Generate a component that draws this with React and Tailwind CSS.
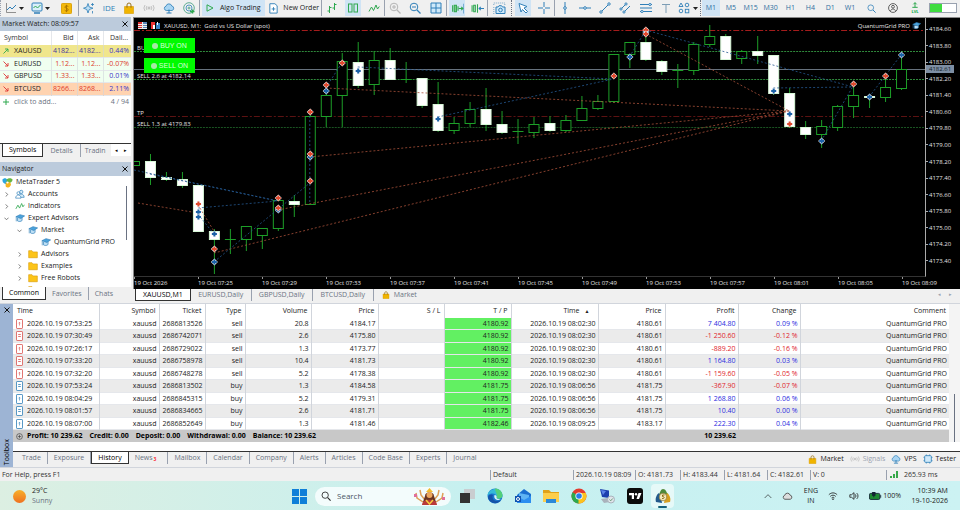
import React, { useState } from 'react';
import clsx from 'clsx';

const BLUE = '#2f7fb8';
const GREEN = '#2fa84f';

/* ---------- icons ---------- */

const Svg = ({ size = 12, box = 12, color = BLUE, children, ...rest }) => (
    <svg width={size} height={size} viewBox={`0 0 ${box} ${box}`} fill="none" stroke={color} strokeWidth="1" aria-hidden="true" className="shrink-0" {...rest}>
        {children}
    </svg>
);

const Caret = () => (
    <svg width="5" height="3" viewBox="0 0 5 3" className="shrink-0" aria-hidden="true"><path d="M0 0h5L2.500 3z" fill="#222" /></svg>
);

const Bag = ({ size = 12 }) => (
    <Svg size={size}>
        <path d="M4 5V3a2 2 0 0 1 4 0v2" stroke="#9a7420" />
        <path d="M1.500 4.500h9v7h-9z" fill="#f0b400" stroke="#d79a00" strokeWidth=".6" />
        <path d="M4 4v2M8 4v2" stroke="#9a7420" strokeWidth=".8" />
    </Svg>
);

const Waves = ({ size = 12 }) => (
    <Svg size={size} color="#b5b5b5">
        <circle cx="6" cy="6" r="1" />
        <path d="M4 4a3 3 0 0 0 0 4M8 4a3 3 0 0 1 0 4M2 3a5 5 0 0 0 0 6M10 3a5 5 0 0 1 0 6" strokeWidth=".8" />
    </Svg>
);

const Cloud = ({ size = 12 }) => (
    <Svg size={size}>
        <path d="M3.200 8.500a2.200 2.200 0 0 1-.2-4.300A3 3 0 0 1 8.800 4a2.300 2.300 0 0 1 .2 4.500z" fill="#a9d5f3" strokeWidth=".8" />
        <path d="M6 8v3M3.500 11h5M6 7.500v1" />
    </Svg>
);

const Chip = ({ size = 12 }) => (
    <Svg size={size}>
        <path d="M4 .5v11M8 .5v11M.5 4h11M.5 8h11" strokeWidth=".8" />
        <rect x="2" y="2" width="8" height="8" rx="1" fill="#cfe9fa" />
    </Svg>
);

const Cap = ({ size = 10 }) => (
    <Svg size={size}>
        <path d="M3 6v3.500c1.500 1 4 1 5.500-.5V5.500" fill="#bfe0f5" strokeWidth=".8" />
        <path d="M1 4.500 6 2l5.500 1.500L7 6.500z" fill="#4ba3dc" strokeWidth=".8" />
        <path d="M1.500 5v5" strokeWidth=".8" />
    </Svg>
);

const Folder = () => (
    <Svg size={10} color="#d79a00">
        <path d="M.8 2h4l1 1.500h5.400v7H.8z" fill="#fcc419" strokeWidth=".7" />
    </Svg>
);

const People = () => (
    <Svg size={10}>
        <circle cx="7.500" cy="3.500" r="2" fill="#d7ecf9" strokeWidth=".8" />
        <path d="M4.500 10c0-5 6.500-5 6.500 0z" fill="#d7ecf9" strokeWidth=".8" />
        <circle cx="4" cy="5" r="1.700" fill="#fff" strokeWidth=".8" />
        <path d="M.8 11c0-5 6.400-5 6.400 0z" fill="#fff" strokeWidth=".8" />
    </Svg>
);

const Zigzag = ({ size = 12 }) => (
    <Svg size={size} color={GREEN}><path d="M1 9.500 3.500 5l2 3.500L8 3l1.500 4 1.800-2.500" /></Svg>
);

const MtLogo = ({ size = 11 }) => (
    <Svg size={size} stroke="none">
        <path d="M.5 3C1.500.8 5 .8 5.500 3v5C3 8 .2 6 .5 3z" fill="#2aa7e0" />
        <path d="M5 3C6 .8 11 .8 11.500 3c0 2-2 3.500-4 3.500L5 6z" fill="#67b644" />
        <path d="M4 6c2-1 4.500-.5 5.500 1S8.500 11.500 6 11.500 4 9 4 8z" fill="#f6b51e" />
        <circle cx="6" cy="6" r="1.200" fill="#fff" />
    </Svg>
);

const Doc = ({ color, lines }) => (
    <svg width="7" height="10" viewBox="0 0 7 10" fill="#fff" stroke={color} strokeWidth=".8" className="shrink-0" aria-hidden="true">
        <rect x=".5" y=".5" width="6" height="9" rx=".6" />
        {lines ? <path d="M2.200 3.500h2.600M2.200 5.500h2.600" /> : <path d="M3.500 6.500v-3M2.500 4.300l1-1 1 1" strokeWidth=".6" />}
    </svg>
);

const Mag = ({ sign = '', color = BLUE, size = 12 }) => (
    <Svg size={size} color={color}>
        <circle cx="5" cy="5" r="3.800" />
        <path d="m8 8 3.500 3.500" strokeWidth="1.300" />
        {sign && <path d={sign === '+' ? 'M3 5h4M5 3v4' : 'M3 5h4'} />}
    </Svg>
);

/* ---------- toolbar ---------- */

const Tool = ({ label, active, children, className }) => (
    <button type="button" aria-label={label} className={clsx('flex h-4 min-w-4 items-center justify-center', active && 'bg-[#d0e4f5]', className)}>
        {children}
    </button>
);

const Group = ({ className, children }) => (
    <div className={clsx('flex h-4 shrink-0 items-center justify-around border-l', className)}>{children}</div>
);

const frames = ['M1', 'M5', 'M15', 'M30', 'H1', 'H4', 'D1', 'W1'];

const Toolbar = () => {
    const [frame, setFrame] = useState('M1');
    return (
        <header className="flex h-[17px] items-start overflow-hidden bg-[#f0f0f0]">
            <Group className="w-[78px] border-dotted border-gray-400">
                <Tool label="Charts" className="gap-[2px]">
                    <Svg><path d="M1.500 1v9.500H11" stroke="#777" strokeWidth=".8" /><path d="m2 8 3-3 2 2 4-4" /></Svg>
                    <Caret />
                </Tool>
                <Tool label="Templates" className="gap-[2px]">
                    <Svg><rect x="1" y="1" width="10" height="8" rx="1" fill="#d9effb" /><path d="m2.500 6 2-2 2 2L9.500 3" stroke={GREEN} /><path d="M3 11h6" strokeWidth="1.500" /></Svg>
                    <Caret />
                </Tool>
                <Tool label="Deposit">
                    <Svg size={11}><rect x=".5" y=".5" width="11" height="11" rx="1" fill="#f4b90c" stroke="#d99e00" /><path d="M8 4C7 2.500 4 3 4.300 4.600 4.600 6.200 8 5.600 7.900 7.500 7.700 9 5 9.200 4 7.800M6 2v8" stroke="#a87300" /></Svg>
                </Tool>
            </Group>
            <Group className="w-[121px] border-gray-400">
                <Tool label="Assistant"><Svg><path d="M5 1.500 6.200 5 10 6.200 6.200 7.500 5 11 3.800 7.500.5 6.200 3.800 5z" fill="#bfe0f5" strokeWidth=".8" /><path d="M9.500 1v3M8 2.500h3M9.500 9v2.500" strokeWidth=".8" /></Svg></Tool>
                <Tool label="IDE" className="text-[8px] text-[#2f7fb8]">IDE</Tool>
                <Tool label="Market"><Bag /></Tool>
                <Tool label="Signals"><Waves /></Tool>
                <Tool label="VPS"><Cloud /></Tool>
                <Tool label="Copy trading">
                    <Svg size={12} color="#3a9a7a"><circle cx="6" cy="6" r="5.300" strokeWidth=".8" /><circle cx="6" cy="6" r="3" stroke={BLUE} strokeWidth=".8" /><circle cx="6" cy="6" r="1" strokeWidth=".8" /><path d="M7 9.500h4.500M9.500 7.500v4" stroke={GREEN} strokeWidth="1.500" /></Svg>
                </Tool>
            </Group>
            <Group className="w-[122px] border-gray-400">
                <Tool label="Algo Trading" active className="w-[63px] gap-[6px]">
                    <Svg size={8} box={8} color={GREEN}><path d="m1 .8 6 3.200L1 7.200z" /></Svg>
                    <span className="text-[#222]">Algo Trading</span>
                </Tool>
                <Tool label="New Order" className="gap-1">
                    <Svg size={11}><path d="M2 .8h5.500L10 3v8H2z" fill="#fff" /><path d="M6 4.500v4M4 6.500h4" /></Svg>
                    <span className="whitespace-nowrap text-[#222]">New Order</span>
                </Tool>
            </Group>
            <Group className="w-[63px] border-gray-400">
                <Tool label="Bar chart"><Svg color={GREEN}><path d="M3.500 4v7M1.500 9h2M3.500 5.500h2M8.500 1v7M6.500 6h2M8.500 2.500h2" /></Svg></Tool>
                <Tool label="Candlesticks" active><Svg color={GREEN}><rect x="1.500" y="2" width="3.500" height="8" /><rect x="7" y="2" width="3.500" height="8" /></Svg></Tool>
                <Tool label="Line chart"><Zigzag /></Tool>
            </Group>
            <Group className="w-[62px] border-gray-400">
                <Tool label="Zoom in"><Mag sign="+" color="#b5b5b5" /></Tool>
                <Tool label="Zoom out"><Mag sign="-" /></Tool>
                <Tool label="Tile windows"><Svg><path d="M1 1h10v10H1zM6 1v10M1 6h10" fill="#cfe9fa" /></Svg></Tool>
            </Group>
            <Group className="w-[41px] border-gray-400">
                <Tool label="Auto scroll" active><Svg size={13} color={GREEN}><path d="M1.500 3v6M3 3h2v6H3zM6.500 4v4" fill="#7fd08f" /><path d="M12 1.500v9" stroke={BLUE} /><path d="M7 6h4M9.500 4.500 11 6 9.500 7.500" /></Svg></Tool>
                <Tool label="Chart shift"><Svg size={13} color={GREEN}><path d="M1 3v6M2.500 3h1.500v6H2.500zM6 2v8" /><path d="M12 6H7.500M9 4.500 7.500 6 9 7.500" stroke={BLUE} /></Svg></Tool>
            </Group>
            <Group className="w-6 border-gray-400">
                <Tool label="Screenshot"><Svg size={13} box={13}><path d="M.8 3V1h11v2M.8 5v7" stroke="#7aa7c7" strokeDasharray="1 1" /><path d="M3 5h2l1-1.300h2.500l1 1.300H12v6.500H3z" fill="#cfe9fa" /><circle cx="7.500" cy="8" r="1.800" /></Svg></Tool>
            </Group>
            <Group className="w-[43px] border-dotted border-gray-500">
                <Tool label="Cursor" active><Svg><path d="m2 1.500 8 3-3 1.500 3.500 3.500-1.500 1.500L5.500 7.500 4 10z" fill="#fff" /></Svg></Tool>
                <Tool label="Crosshair"><Svg><path d="M6 0v5M6 7v5M0 6h5M7 6h5" /></Svg></Tool>
            </Group>
            <Group className="w-[146px] border-gray-400">
                <Tool label="Vertical line"><Svg><path d="M6 0v12" /><circle cx="6" cy="6" r="1.300" fill="#fff" /></Svg></Tool>
                <Tool label="Horizontal line"><Svg><path d="M0 6h12" /><circle cx="6" cy="6" r="1.300" fill="#fff" /></Svg></Tool>
                <Tool label="Trend line"><Svg><path d="m2 10 8-8" /><circle cx="2" cy="10" r="1.200" fill="#fff" /><circle cx="10" cy="2" r="1.200" fill="#fff" /></Svg></Tool>
                <Tool label="Channel"><Svg><path d="m2 7 5-5M5 10l6-6" /><circle cx="2" cy="7" r="1.100" fill="#fff" /><circle cx="7" cy="2" r="1.100" fill="#fff" /><circle cx="5" cy="10" r="1.100" fill="#fff" /></Svg></Tool>
                <Tool label="Fibonacci"><Svg><path d="M0 2.500h12M0 6h12M0 9.500h12" /><circle cx="2" cy="9.500" r="1.100" fill="#fff" /><circle cx="10" cy="2.500" r="1.100" fill="#fff" /></Svg></Tool>
                <Tool label="Text"><Svg color="#7d9db5"><path d="M2 2.500h8M6 2.500V11" /></Svg></Tool>
                <Tool label="Objects" className="gap-[3px]">
                    <Svg><path d="m3 1 2 3.500H1z" strokeWidth=".9" /><circle cx="9" cy="3" r="1.800" strokeWidth=".9" /><circle cx="3" cy="9" r="1.800" strokeWidth=".9" /><rect x="7.300" y="7.300" width="3.500" height="3.500" strokeWidth=".9" /></Svg>
                    <Caret />
                </Tool>
            </Group>
            <Group className="w-[160px] border-dotted border-gray-500">
                {frames.map((f) => (
                    <button key={f} type="button" onClick={() => setFrame(f)} className={clsx('h-4 w-[18px] text-center text-[#2f6f9f]', f === frame && 'bg-[#d0e4f5]')}>{f}</button>
                ))}
            </Group>
            <div className="flex h-4 grow items-center justify-around">
                <Tool label="Search"><Mag size={9} /></Tool>
                <Tool label="Account"><Svg size={10} color="#444"><circle cx="6" cy="6" r="5.300" /><circle cx="6" cy="4.500" r="1.700" /><path d="M3 9.500c1-3 5-3 6 0" /></Svg></Tool>
                <Tool label="Level" className="flex-col">
                    <Svg size={8} color={GREEN}><path d="M6 1v7M3.500 3.500 6 1l2.500 2.500M2 8h8" strokeWidth="1.500" /></Svg>
                    <span className="text-[4px] leading-[4px] font-bold text-green-600">LVL</span>
                </Tool>
                <div className="flex h-[10px] w-7 border border-gray-400 bg-white"><div className="w-3 bg-[#3fdc3f]" /></div>
            </div>
        </header>
    );
};

/* ---------- left side ---------- */

const quotes = [
    { name: 'XAUUSD', bid: '4182...', ask: '4182...', day: '0.44%', up: true, row: 'bg-[#f0e68c]', price: 'text-[#4338a0]' },
    { name: 'EURUSD', bid: '1.12...', ask: '1.12...', day: '-0.07%', row: 'bg-[#f0fff0]', price: 'text-[#dc3a2c]', neg: true },
    { name: 'GBPUSD', bid: '1.33...', ask: '1.33...', day: '0.01%', row: 'bg-[#f0fff0]', price: 'text-[#dc3a2c]' },
    { name: 'BTCUSD', bid: '8266...', ask: '8268...', day: '2.11%', row: 'bg-[#ffd3b0]', price: 'text-[#e0402c]' },
];

const PanelTitle = ({ children }) => (
    <div className="flex h-[14px] shrink-0 items-center justify-between bg-[#bccbdc] pr-[3px] pl-[2px] text-[#222]">
        <h2>{children}</h2>
        <button type="button" aria-label="Close">
            <Svg size={6} box={6} color="#111"><path d="m.5.5 5 5m0-5-5 5" /></Svg>
        </button>
    </div>
);

const SideTab = ({ active, className = 'px-[7px]', children }) => (
    <button type="button" className={clsx('h-[13px] shrink-0', active ? 'border border-t-0 border-[#333] bg-white px-[6px] text-black' : 'text-gray-500', !active && className)}>{children}</button>
);

const MarketWatch = () => (
    <section className="flex h-[140px] flex-col bg-white">
        <PanelTitle>Market Watch: 08:09:57</PanelTitle>
        <table className="h-[77px] w-full table-fixed border-collapse whitespace-nowrap">
            <colgroup><col className="w-[51px]" /><col className="w-[26px]" /><col className="w-[26px]" /><col /></colgroup>
            <thead>
                <tr className="h-[14px] text-right text-[#333]">
                    <th className="border-r border-gray-200 pl-1 text-left font-normal">Symbol</th>
                    <th className="border-r border-gray-200 pr-[3px] font-normal">Bid</th>
                    <th className="border-r border-gray-200 pr-[3px] font-normal">Ask</th>
                    <th className="pr-[3px] font-normal">Dail...</th>
                </tr>
            </thead>
            <tbody>
                {quotes.map((q) => (
                    <tr key={q.name} className={clsx('border-b border-gray-200 text-right', q.row)}>
                        <td className="border-r border-gray-300/60 pl-[3px] text-left text-[#222]">
                            <span className="flex items-center gap-[5px]">
                                <Svg size={6} box={6} color={q.up ? GREEN : '#d33'}>
                                    <path d={q.up ? 'M.5 5.500 5 1M2 1h3v3' : 'M.5.500 5 5M2 5h3V2'} strokeWidth=".9" />
                                </Svg>
                                {q.name}
                            </span>
                        </td>
                        <td className={clsx('border-r border-gray-300/60 pr-[2px]', q.price)}>{q.bid}</td>
                        <td className={clsx('border-r border-gray-300/60 pr-[2px]', q.price)}>{q.ask}</td>
                        <td className={clsx('pr-[2px]', q.neg ? 'text-[#dc3a2c]' : 'text-[#3a35c8]')}>{q.day}</td>
                    </tr>
                ))}
                <tr className="text-gray-500">
                    <td colSpan="3" className="pl-[3px]">
                        <span className="flex items-center gap-[5px]"><Svg size={6} box={6} color={GREEN}><path d="M3 0v6M0 3h6" /></Svg>click to add...</span>
                    </td>
                    <td className="pr-[2px] text-right">4 / 94</td>
                </tr>
            </tbody>
        </table>
        <div className="mt-auto flex h-[14px] items-start border-t border-[#333] bg-[#f0f0f0] pl-[2px]">
            <SideTab active>Symbols</SideTab>
            <SideTab>Details</SideTab>
            <SideTab className="border-l border-gray-400 pl-1">Tradin</SideTab>
            <div className="ml-auto flex h-3 items-center gap-[6px] bg-white px-1 text-[5px]">
                <button type="button" aria-label="Previous tab">◂</button>
                <button type="button" aria-label="Next tab">▸</button>
            </div>
        </div>
    </section>
);

const tree = [
    { text: 'Accounts', icon: <People />, pad: 'pl-1' },
    { text: 'Indicators', icon: <Zigzag size={10} />, pad: 'pl-1' },
    { text: 'Expert Advisors', icon: <Cap />, pad: 'pl-1', open: true },
    { text: 'Market', icon: <Cap />, pad: 'pl-[17px]', open: true },
    { text: 'QuantumGrid PRO', icon: <Cap />, pad: 'pl-[30px]', leaf: true },
    { text: 'Advisors', icon: <Folder />, pad: 'pl-[17px]' },
    { text: 'Examples', icon: <Folder />, pad: 'pl-[17px]' },
    { text: 'Free Robots', icon: <Folder />, pad: 'pl-[17px]' },
    { text: '', icon: <Folder />, pad: 'pl-[17px]', leaf: true },
];

const Navigator = () => (
    <section className="flex h-[139px] flex-col bg-white">
        <PanelTitle>Navigator</PanelTitle>
        <div className="flex min-h-0 grow justify-between overflow-hidden pr-1">
            <ul className="text-[#222]">
                <li className="flex h-3 items-center gap-[3px] pl-[2px]"><MtLogo />MetaTrader 5</li>
                {tree.map((n) => (
                    <li key={n.text} className={clsx('flex h-3 items-center', n.pad)}>
                        <span className="flex w-[11px]">
                            {!n.leaf && <Svg size={5} box={6} color="#666"><path d={n.open ? 'm.5 2 2.500 2.500L5.500 2' : 'm2 .5 2.500 2.500L2 5.500'} /></Svg>}
                        </span>
                        {n.icon}
                        <span className="pl-[3px]">{n.text}</span>
                    </li>
                ))}
            </ul>
            <div className="mt-[10px] h-[54px] w-px bg-gray-500" />
        </div>
        <div className="flex h-[14px] shrink-0 items-start bg-[#f0f0f0] pl-[2px]">
            <SideTab active>Common</SideTab>
            <SideTab className="px-[6px]">Favorites</SideTab>
            <SideTab className="border-l border-gray-400 px-[6px]">Chats</SideTab>
        </div>
    </section>
);

/* ---------- chart ---------- */

// x, high, body top, body bottom, low, bearish
const candles = [
    [134, 161, 161, 165, 165, 0], [150, 154, 161, 177, 185, 1], [166, 172, 177, 179, 181, 1], [182, 172, 179, 185, 188, 1],
    [198, 185, 185, 231, 231, 1], [214, 229, 231, 239, 274, 1], [230, 229, 239, 239, 254, 0], [246, 226, 226, 239, 251, 0],
    [262, 228, 228, 235, 249, 0], [278, 198, 200, 228, 231, 0], [294, 195, 201, 204, 217, 1], [310, 114, 116, 204, 204, 0],
    [326, 84, 95, 116, 127, 0], [342, 53, 61, 95, 127, 0], [358, 42, 62, 85, 88, 1], [374, 51, 60, 84, 95, 0],
    [390, 48, 60, 79, 79, 1], [406, 62, 79, 79, 83, 0], [422, 78, 78, 105, 108, 1], [438, 82, 104, 130, 132, 1],
    [454, 117, 123, 130, 134, 0], [470, 102, 109, 123, 127, 0], [486, 88, 109, 124, 131, 1], [502, 111, 124, 132, 134, 1],
    [518, 119, 131, 131, 144, 0], [534, 117, 124, 132, 138, 0], [550, 116, 123, 130, 132, 1], [566, 115, 120, 130, 132, 0],
    [582, 96, 108, 120, 120, 0], [598, 95, 101, 108, 110, 0], [614, 54, 54, 101, 103, 0], [630, 42, 42, 54, 68, 0],
    [646, 30, 42, 59, 61, 1], [662, 60, 61, 71, 75, 1], [678, 64, 70, 70, 88, 0], [694, 42, 44, 70, 75, 0],
    [710, 25, 36, 44, 47, 0], [726, 34, 36, 59, 60, 1], [742, 50, 51, 58, 64, 0], [758, 36, 51, 55, 64, 1],
    [774, 55, 55, 93, 95, 1], [790, 88, 93, 126, 128, 1], [806, 121, 127, 134, 139, 1], [822, 120, 126, 134, 148, 0],
    [838, 105, 106, 127, 131, 0], [854, 86, 95, 106, 118, 0], [870, 95, 96, 97, 108, 1], [886, 78, 87, 97, 102, 0],
    [902, 56, 69, 88, 90, 0],
];

const sellLines = [
    [138, 203, 192, 212], [200, 208, 214, 231], [214, 253, 790, 111], [278, 210, 790, 111],
    [310, 157, 790, 111], [326, 88, 790, 111], [646, 34, 790, 111],
];

const buyLines = [
    [134, 170, 278, 201], [150, 174, 278, 201], [198, 208, 278, 201], [198, 214, 214, 234], [214, 262, 310, 183],
    [310, 202, 310, 114], [326, 88, 342, 63], [358, 67, 614, 79], [438, 117, 614, 79], [630, 57, 646, 31],
    [646, 30, 854, 87], [774, 88, 854, 87], [822, 141, 854, 86], [870, 97, 902, 55],
];

const sells = [[198, 204], [214, 249], [278, 198], [278, 208], [310, 112], [310, 154], [310, 181], [326, 85], [342, 63], [614, 76], [646, 30], [646, 34], [790, 124], [854, 84], [886, 76]];
const buys = [[198, 212], [198, 217], [214, 234], [214, 262], [278, 210], [310, 157], [326, 91], [358, 71], [438, 119], [630, 57], [646, 32], [774, 91], [790, 114], [822, 141], [870, 97], [902, 55]];

const Mark = ({ x, y, fill }) => (
    <g>
        <path d={`M${x + 0.5} ${y - 3.5}l3.500 3.500-3.500 3.500-3.500-3.500z`} fill="#f4f4f4" />
        <path d={`M${x - 0.5} ${y - 2.5}h2v1.500h1.500v2h-1.500v1.500h-2v-1.500h-1.500v-2h1.500z`} fill={fill} />
    </g>
);

const prices = Array.from({ length: 15 }, (_, i) => (4184.6 - i * 0.8).toFixed(2));
const times = ['2026', '07:25', '07:29', '07:33', '07:37', '07:41', '07:45', '07:49', '07:53', '07:57', '08:01', '08:05', '08:09'];

const Plot = () => (
    <svg viewBox="134 18 792 258" preserveAspectRatio="none" className="h-[258px] w-full" role="img" aria-label="XAUUSD one minute candles">
        <g fill="none" strokeWidth="1">
            <path d="M134 30.500h792" stroke="#a51c1c" strokeDasharray="6 2 2 2" />
            <path d="M134 51.500h792M134 79.500h792" stroke="#2f8a3b" strokeDasharray="2 1" />
            <path d="M134 69.500h792" stroke="#66717d" />
            <path d="M134 116.500h792" stroke="#5c1212" strokeDasharray="6 2 2 2" />
            <path d="M134 127.500h792" stroke="#1a5422" strokeDasharray="2 1" />
        </g>
        {candles.map(([x, high, top, bottom, low, bear]) => (
            <g key={x} stroke="#1d9f28" strokeWidth="1">
                <path d={`M${x + 0.5} ${high}V${low}`} />
                {top === bottom
                    ? <path d={`M${x - 5} ${top + 0.5}h11`} />
                    : <rect x={x - 4.5} y={top + 0.5} width="10" height={bottom - top} fill={bear ? '#fff' : '#000'} stroke={bear ? '#d8f8d8' : '#1d9f28'} />}
            </g>
        ))}
        <g fill="none" strokeWidth="1">
            {sellLines.map(([a, b, c, d]) => <path key={`${a}-${b}`} d={`M${a} ${b}L${c} ${d}`} stroke="#a8513a" strokeOpacity=".8" strokeDasharray="2 2" />)}
            {buyLines.map(([a, b, c, d]) => <path key={`${a}-${b}`} d={`M${a} ${b}L${c} ${d}`} stroke="#24588f" strokeOpacity=".8" strokeDasharray="2 2" />)}
        </g>
        {buys.map(([x, y]) => <Mark key={`${x}-${y}`} x={x} y={y} fill="#1b62a8" />)}
        {sells.map(([x, y]) => <Mark key={`${x}-${y}`} x={x} y={y} fill="#e0492e" />)}
    </svg>
);

const Chart = () => (
    <section className="flex h-[272px] flex-col overflow-hidden border-t border-l border-[#888] bg-black text-[6px] leading-[8px] text-[#e4e4e4]">
        <div className="flex">
            <div className="relative min-w-0 grow border-r border-b border-r-[#aaa] border-b-[#333]">
                <Plot />
                <div className="absolute top-[3px] right-1 left-1 flex items-center justify-between">
                    <div className="flex items-center gap-1">
                        <svg width="22" height="8" viewBox="0 0 22 8" aria-hidden="true">
                            <path d="M0 0h9v7H0z" fill="#eee" /><path d="M0 0h4v2H0zM0 3h4v1H0zM0 5h4v1H0z" fill="#d33" /><path d="M5 0h4v2H5zM5 3h4v1H5zM5 5h4v1H5z" fill="#5a86b8" />
                            <path d="M13 0h4v7h-4z" fill="#e33" /><path d="M18 1h4v6h-4z" fill="#3b86c8" /><path d="M15 3h2v4h-2zM19 0h1v3h-1z" fill="#fff" />
                        </svg>
                        <h1 className="whitespace-pre">XAUUSD, M1:  Gold vs US Dollar (spot)</h1>
                    </div>
                    <div className="flex items-center gap-[2px]">QuantumGrid PRO <Cap size={9} /></div>
                </div>
                <span className="absolute top-[26px] left-[3px]">BU</span>
                <span className="absolute top-[54px] left-[3px]">SELL 2.6 at 4182.14</span>
                <span className="absolute top-[91px] left-[3px]">TP</span>
                <span className="absolute top-[102px] left-[3px]">SELL 1.3 at 4179.83</span>
                <div className="absolute top-5 left-[10px] flex w-[51px] flex-col gap-[5px] font-['Liberation_Sans',sans-serif] text-[7px] text-[#d6ffd6]">
                    {['BUY ON', 'SELL ON'].map((t) => (
                        <button key={t} type="button" className="flex h-[15px] items-center justify-center gap-[2px] bg-[#00fa00]">
                            <span className="size-[6px] rounded-full bg-[#a5e8a5]" />{t}
                        </button>
                    ))}
                </div>
            </div>
            <div className="relative flex w-[34px] shrink-0 flex-col justify-between pt-[7px] pb-3">
                {prices.map((p) => (
                    <span key={p} className="flex items-center gap-px"><i className="h-px w-[2px] bg-[#aaa]" />{p}</span>
                ))}
                <span className="absolute top-[47px] left-0 w-[28px] bg-[#7d8ea3] pl-[3px] text-[#111a26]">4182.61</span>
            </div>
        </div>
        <div className="flex overflow-hidden">
            {times.map((t) => (
                <span key={t} className="w-16 shrink-0 whitespace-nowrap"><i className="block h-[2px] w-px bg-[#999]" />19 Oct {t}</span>
            ))}
        </div>
    </section>
);

const ChartTabs = () => (
    <nav className="flex h-[14px] items-start bg-[#f0f0f0] pl-[2px] text-gray-500">
        <button type="button" className="h-[12px] border border-t-0 border-[#333] bg-white px-[7px] text-black">XAUUSD,M1</button>
        {['EURUSD,Daily', 'GBPUSD,Daily', 'BTCUSD,Daily'].map((t) => (
            <button key={t} type="button" className="h-3 w-[61px] border-r border-gray-400 text-center">{t}</button>
        ))}
        <button type="button" className="flex h-3 items-center gap-[4px] pl-2"><Bag size={8} />Market</button>
        <span className="ml-auto flex gap-2 pr-2 text-[5px] text-gray-400"><span>◂</span><span>▸</span></span>
    </nav>
);

/* ---------- toolbox ---------- */

const deals = [
    ['2026.10.19 07:53:25', '2686813526', 'sell', '20.8', '4184.17', '4180.92', '2026.10.19 08:02:30', '4180.61', '7 404.80', '0.09 %'],
    ['2026.10.19 07:30:49', '2686742071', 'sell', '2.6', '4175.80', '4180.92', '2026.10.19 08:02:30', '4180.61', '-1 250.60', '-0.12 %'],
    ['2026.10.19 07:26:17', '2686729022', 'sell', '1.3', '4173.77', '4180.92', '2026.10.19 08:02:30', '4180.61', '-889.20', '-0.16 %'],
    ['2026.10.19 07:33:20', '2686758978', 'sell', '10.4', '4181.73', '4180.92', '2026.10.19 08:02:30', '4180.61', '1 164.80', '0.03 %'],
    ['2026.10.19 07:32:20', '2686748278', 'sell', '5.2', '4178.38', '4180.92', '2026.10.19 08:02:30', '4180.61', '-1 159.60', '-0.05 %'],
    ['2026.10.19 07:53:24', '2686813502', 'buy', '1.3', '4184.58', '4181.75', '2026.10.19 08:06:56', '4181.75', '-367.90', '-0.07 %'],
    ['2026.10.19 08:04:29', '2686845315', 'buy', '5.2', '4179.31', '4181.75', '2026.10.19 08:06:56', '4181.75', '1 268.80', '0.06 %'],
    ['2026.10.19 08:01:57', '2686834665', 'buy', '2.6', '4181.71', '4181.75', '2026.10.19 08:06:56', '4181.75', '10.40', '0.00 %'],
    ['2026.10.19 08:07:00', '2686852649', 'buy', '1.3', '4181.46', '4182.46', '2026.10.19 08:09:25', '4183.17', '222.30', '0.04 %'],
];

const heads = ['Symbol', 'Ticket', 'Type', 'Volume', 'Price', 'S / L', 'T / P', 'Time', 'Price', 'Profit', 'Change', 'Comment'];
const toolTabs = ['Trade', 'Exposure', 'History', 'News', 'Mailbox', 'Calendar', 'Company', 'Alerts', 'Articles', 'Code Base', 'Experts', 'Journal'];

const Cell = ({ className, children }) => (
    <td className={clsx('border-r border-gray-300 pr-[2px]', className)}>{children}</td>
);

const History = () => (
    <table className="h-[138px] w-full table-fixed border-collapse text-right whitespace-nowrap text-[#222]">
        <colgroup>
            <col className="w-[86px]" /><col className="w-[60px]" /><col className="w-[46px]" /><col className="w-[40px]" />
            <col className="w-[66px]" /><col className="w-[67px]" /><col className="w-[66px]" /><col className="w-[67px]" />
            <col className="w-[87px]" /><col className="w-[67px]" /><col className="w-[73px]" /><col className="w-[62px]" /><col />
        </colgroup>
        <thead>
            <tr className="h-[14px]">
                <th className="border-r border-gray-300 pl-1 text-left font-normal">Time</th>
                {heads.map((h, i) => (
                    <th key={i} className="border-r border-gray-300 pr-[3px] font-normal last:border-r-0">
                        {h}{h === 'Time' && <span className="px-[5px] text-[5px]">▲</span>}
                    </th>
                ))}
            </tr>
        </thead>
        <tbody>
            {deals.map(([open, ticket, type, volume, price, tp, close, last, profit, change], i) => {
                const tone = profit.startsWith('-') ? 'text-[#e0242c]' : 'text-[#2b2be0]';
                return (
                    <tr key={ticket} className={clsx('border-b border-gray-200', i % 2 && 'bg-[#ebebeb]')}>
                        <Cell className="text-left">
                            <span className="flex items-center gap-1 pl-[3px]">
                                <Doc color={type === 'sell' ? '#d9534f' : '#2f7fb8'} lines={i % 2} />
                                {open}
                            </span>
                        </Cell>
                        <Cell>xauusd</Cell>
                        <Cell>{ticket}</Cell>
                        <Cell>{type}</Cell>
                        <Cell>{volume}</Cell>
                        <Cell>{price}</Cell>
                        <Cell />
                        <Cell className="bg-[#62f062]">{tp}</Cell>
                        <Cell>{close}</Cell>
                        <Cell>{last}</Cell>
                        <Cell className={tone}>{profit}</Cell>
                        <Cell className={tone}>{change}</Cell>
                        <td className="pr-[2px]">QuantumGrid PRO</td>
                    </tr>
                );
            })}
            <tr className="bg-[#c8c8c8] font-bold text-black">
                <td colSpan="10" className="text-left">
                    <span className="flex items-center gap-1 pl-[3px]">
                        <Svg size={7} color="#333"><circle cx="6" cy="6" r="5" /><path d="M6 3v6M3 6h6" /></Svg>
                        <span className="flex gap-[7px]">
                            <span>Profit: 10 239.62</span><span>Credit: 0.00</span><span>Deposit: 0.00</span><span>Withdrawal: 0.00</span><span>Balance: 10 239.62</span>
                        </span>
                    </span>
                </td>
                <td className="pr-[2px]">10 239.62</td>
                <td colSpan="2" />
            </tr>
        </tbody>
    </table>
);

const Toolbox = () => {
    const [tab, setTab] = useState('History');
    return (
        <section className="flex h-[163px]">
            <div className="flex w-[13px] shrink-0 flex-col items-center justify-between bg-[#9db4d4] pt-[3px] pb-[2px]">
                <button type="button" aria-label="Close toolbox"><Svg size={6} box={6} color="#111"><path d="m.5.5 5 5m0-5-5 5" /></Svg></button>
                <span className="rotate-180 [writing-mode:vertical-rl]">Toolbox</span>
            </div>
            <div className="flex min-w-0 grow flex-col justify-between bg-white">
                <div className="flex">
                    <div className="min-w-0 grow"><History /></div>
                    <div className="flex w-[11px] shrink-0 flex-col items-center justify-end bg-[#f4f4f4]"><div className="h-12 w-px bg-gray-500" /></div>
                </div>
                <div className="flex h-4 items-start justify-between border-t border-[#333] bg-[#f0f0f0]">
                    <nav className="flex h-3 items-center pl-[3px] text-gray-500">
                        {toolTabs.map((t) => (
                            <button key={t} type="button" onClick={() => setTab(t)} className={clsx('h-3 pl-[6px]', t === 'News' ? 'pr-[11px]' : 'pr-[6px]', t === tab ? 'border border-t-0 border-[#333] bg-white text-black' : 'border-r border-gray-400 last:border-r-0')}>
                                {t}{t === 'News' && <sub className="pl-px text-[5px] font-bold text-red-500">3</sub>}
                            </button>
                        ))}
                    </nav>
                    <div className="flex h-[14px] items-center gap-[6px] pr-1 text-[#222]">
                        <button type="button" className="flex items-center gap-[3px]"><Bag size={9} />Market</button>
                        <button type="button" className="flex items-center gap-[3px] text-gray-400"><Waves size={10} />Signals</button>
                        <button type="button" className="flex items-center gap-[3px]"><Cloud size={10} />VPS</button>
                        <button type="button" className="flex items-center gap-[3px]"><Chip size={10} />Tester</button>
                    </div>
                </div>
            </div>
        </section>
    );
};

const StatusBar = () => (
    <footer className="flex h-[14px] items-center border-t border-gray-300 bg-[#f0f0f0] text-[#333] *:border-gray-400 *:pl-[2px]">
        <span className="grow">For Help, press F1</span>
        <span className="w-[83px] border-l">Default</span>
        <span className="w-[62px] border-l">2026.10.19 08:09</span>
        <span className="w-[45px] border-l">O: 4181.73</span>
        <span className="w-11 border-l">H: 4183.44</span>
        <span className="w-[43px] border-l">L: 4181.64</span>
        <span className="w-[43px] border-l">C: 4182.61</span>
        <span className="w-[76px] border-l">V: 0</span>
        <span className="flex w-[74px] items-center gap-[5px] border-l">
            <svg width="9" height="7" viewBox="0 0 9 7" className="ml-px" aria-hidden="true"><path d="M0 5h2v2H0zM3 3h2v4H3zM6 0h2v7H6z" fill="#37a84a" /></svg>
            265.93 ms
        </span>
    </footer>
);

/* ---------- windows taskbar ---------- */

const apps = [
    ['Task view', <><path d="M5 1h11v10H5z" fill="#c9cdd0" /><path d="M1 5h10v10H1z" fill="#333" /></>],
    ['Edge', <><circle cx="8" cy="8" r="7.500" fill="#1a78d0" /><path d="M.5 7.500C1 0 14-2 15.500 7c.3 4-5 4.500-6 2.500.8-3-4-6-9-2z" fill="#35b9d8" /><path d="M8 .5c4 0 7 2.500 7.500 6.500.3 4-5 4.500-6 2.500C11 6 8 4 8 .5z" fill="#53cf7a" /><path d="M6 7c-2 4 2 8 8 5-3 5-12 4-13-3 1-3 4-3 5-2z" fill="#1553a8" /><path d="M7.500 7c2 0 2.500 1.500 2 2.500 0 1.500 3 2 4.500 1.500-2 2-8 1-6.500-4z" fill="#d8f5f5" /></>],
    ['Outlook', <><path d="m2 7 7-6 7 5v8H2z" fill="#1a6fd0" /><path d="m4 5 10 2v5H4z" fill="#5fb4f4" /><path d="m2 8 7 4 7-4v7H2z" fill="#2c8ef0" /><path d="M0 8h6v6H0z" fill="#0f52b0" /><circle cx="3" cy="11" r="1.500" fill="none" stroke="#fff" /></>],
    ['Explorer', <><path d="M0 2h6l2 2h8v5H0z" fill="#e0a21a" /><path d="M0 5h16v9H0z" fill="#fcce4b" /><path d="M3 11h10v4H3z" fill="#2b88d8" /></>],
    ['Chrome', <><circle cx="8" cy="8" r="7.500" fill="#e33b2e" /><path d="M8 8 1.500 4.200A7.500 7.500 0 0 0 8 15.500z" fill="#2da94f" /><path d="M8 8h-.5v7.500A7.500 7.500 0 0 0 14.800 5H8z" fill="#fcc31e" /><circle cx="8" cy="8" r="3.600" fill="#fff" /><circle cx="8" cy="8" r="2.800" fill="#2b7de9" /></>],
    ['Remote desktop', <><path d="m1 1 9 1.500V10L3 9z" fill="#1c3fae" /><path d="m2 2 5 1-3 4z" fill="#5a83e8" /><path d="m2 11 7-1 2 4-6 1z" fill="#a9b2bc" /><circle cx="12" cy="11.500" r="3.500" fill="#dfe5ea" stroke="#a9b2bc" /><path d="m10.500 11.500 1.200 1.300 2-2.300" stroke="#6a9a78" fill="none" /></>],
    ['TradingView', <><rect width="16" height="16" rx="3" fill="#0b0b0b" /><path d="M2 5h5v6H4.800V7.300H2z" fill="#fff" /><circle cx="9" cy="6.200" r="1.200" fill="#fff" /><path d="M11.500 5H14.500L12 11H9.500z" fill="#fff" /></>],
];

const Taskbar = () => (
    <div className="flex h-[30px] items-center justify-between bg-linear-to-r from-[#dcefe2] via-[#c6f0f0] to-[#ccf2f3] pr-3 pl-[13px] text-[#222]">
        <div className="flex w-[279px] items-center gap-[6px] leading-[10px]">
            <span className="size-[13px] rounded-full bg-linear-to-b from-[#f7b02a] to-[#ee7020]" />
            <p>29°C<br /><span className="text-gray-500">Sunny</span></p>
        </div>
        <div className="flex grow items-center gap-2">
            <button type="button" aria-label="Start">
                <svg width="15" height="15" viewBox="0 0 15 15" className="block"><path d="M0 0h7v7H0zM8 0h7v7H8zM0 8h7v7H0zM8 8h7v7H8z" fill="#0f7fd8" /></svg>
            </button>
            <label className="flex h-[19px] w-[136px] items-center gap-[6px] rounded-full bg-[#f3fcfc] px-[6px]">
                <Mag size={10} color="#222" />
                <input type="text" placeholder="Search" aria-label="Search" className="w-full min-w-0 text-[8px] outline-none placeholder:text-gray-600" />
                <svg width="31" height="17" viewBox="0 0 31 17" className="shrink-0" aria-hidden="true">
                    <path d="M9 14 3 10 2 5M11 12 7 7 6 2M22 14l6-4 1-5M20 12l4-5 1-5" stroke="#dfa055" strokeWidth="1.500" fill="none" />
                    <path d="M0 6h3v3H0zM28 9h3v3h-3z" fill="#e0709a" />
                    <path d="M11 8c0-5 9-5 9 0l2 6H9z" fill="#6a3422" />
                    <path d="M12 4 15.500 0 19 4z" fill="#f2bb2c" /><circle cx="15.500" cy="7" r="3" fill="#eda75c" />
                    <path d="M8 17c0-7 15-7 15 0z" fill="#b93a3a" /><path d="m12 12 3.500 4 3.500-4" stroke="#f7cf3e" strokeWidth="1.500" fill="none" />
                </svg>
            </label>
            <div className="flex gap-3">
                {apps.map(([name, art]) => (
                    <button key={name} type="button" aria-label={name}><svg width="16" height="16" viewBox="0 0 16 16" className="block">{art}</svg></button>
                ))}
            </div>
            <button type="button" aria-label="MetaTrader 5" className="flex h-6 w-[23px] flex-col items-center justify-between rounded bg-[#e6f9f8] pt-1">
                <svg width="16" height="16" viewBox="0 0 16 16">
                    <path d="M8 1c3 0 3 3 5 5L8 9 4 7c1-3 2-6 4-6z" fill="#4f8a3c" />
                    <path d="M4 5c-3 2-4 6-3 9l6 1-1-6z" fill="#235a8c" /><path d="M12 5c3 2 4 6 3 9l-6 1 1-6z" fill="#d6a020" />
                    <circle cx="8" cy="9" r="3.800" fill="#f5e9bd" stroke="#8a7430" strokeWidth=".7" /><path d="M9.500 7h-2v1.500c2.500 0 2 2.500-.5 2" stroke="#8a6a10" fill="none" />
                </svg>
                <span className="h-[2px] w-[9px] rounded bg-[#15607a]" />
            </button>
        </div>
        <div className="flex w-[184px] shrink-0 items-center justify-between leading-[10px]">
            <Svg size={8} color="#222"><path d="m1 9 5-5 5 5" /></Svg>
            <Svg size={11} color="#555"><path d="M3.200 9a2.200 2.200 0 0 1-.2-4.300A3 3 0 0 1 8.800 4.500a2.300 2.300 0 0 1 .2 4.500z" fill="#ddd" /></Svg>
            <p className="text-center">ENG<br />IN</p>
            <Svg size={10} color="#222"><path d="M1 4.500c3-3 7-3 10 0M2.700 6.500c2-2 4.600-2 6.600 0M4.300 8.300c1-1 2.400-1 3.400 0" /><circle cx="6" cy="9.800" r=".6" /></Svg>
            <Svg size={10} color="#222"><path d="M1 4.500h2L6 2v8L3 7.500H1zM7.500 4c1 1 1 3 0 4M9.300 2.500c2 2 2 5 0 7" /></Svg>
            <span className="flex items-center gap-px">
                <svg width="13" height="8" viewBox="0 0 15 9" aria-hidden="true"><rect x=".5" y="1.500" width="12" height="7" rx="1.500" fill="#1d8a34" stroke="#123" /><path d="M13.500 3.500v3" stroke="#123" /><path d="M4 0h3v4H4zM5.500 4v2" fill="#123" stroke="#123" /></svg>
                100%
            </span>
            <p className="text-right">10:39 AM<br />19-10-2026</p>
        </div>
    </div>
);

export default function App() {
    return (
        <div className="w-full overflow-hidden bg-[#f0f0f0] font-['Open_Sans','Noto_Sans',sans-serif] text-[7px] leading-[10px]">
            <Toolbar />
            <main className="flex gap-[2px]">
                <aside className="flex w-[131px] shrink-0 flex-col gap-[5px]">
                    <MarketWatch />
                    <Navigator />
                </aside>
                <div className="min-w-0 grow">
                    <Chart />
                    <ChartTabs />
                </div>
            </main>
            <div className="border-t border-gray-300"><Toolbox /></div>
            <StatusBar />
            <Taskbar />
        </div>
    );
}
